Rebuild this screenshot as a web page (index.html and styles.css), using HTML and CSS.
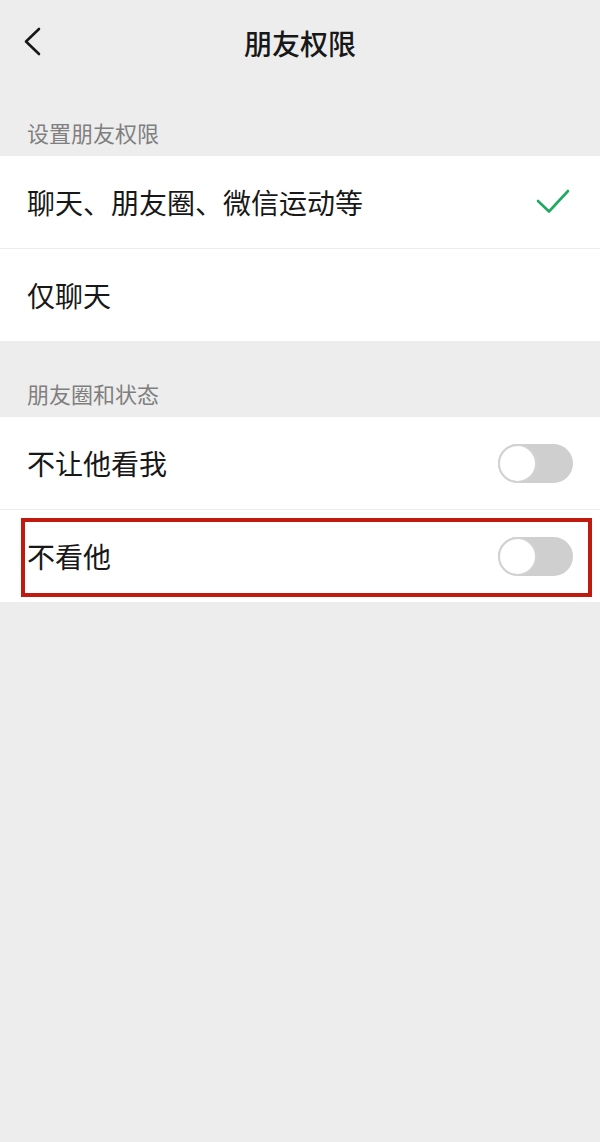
FILE: index.html
```html
<!DOCTYPE html>
<html lang="zh-CN">
<head>
  <meta charset="UTF-8" />
  <meta name="viewport" content="width=device-width, initial-scale=1.0"/>
  <title>朋友权限</title>
  <link rel="stylesheet" href="styles.css">
</head>
<body>
  <div class="nav">
    <svg class="back" width="20" height="32" viewBox="0 0 20 32">
      <polyline points="15,2 2,14.5 15,27" fill="none" stroke="#181818" stroke-width="2.6" stroke-linecap="round" stroke-linejoin="round"/>
    </svg>
    <h1>朋友权限</h1>
  </div>

  <div class="section-title">设置朋友权限</div>
  <div class="card">
    <div class="row">
      <span>聊天、朋友圈、微信运动等</span>
      <svg class="check" width="34" height="26" viewBox="0 0 34 26">
        <polyline points="2,13 13,23.5 32,3" fill="none" stroke="#1faa62" stroke-width="2.6" stroke-linecap="round" stroke-linejoin="round"/>
      </svg>
    </div>
    <div class="row">
      <span>仅聊天</span>
    </div>
  </div>

  <div class="section-title">朋友圈和状态</div>
  <div class="card">
    <div class="row">
      <span>不让他看我</span>
      <div class="switch"><div class="knob"></div></div>
    </div>
    <div class="row marked">
      <span>不看他</span>
      <div class="switch"><div class="knob"></div></div>
    </div>
  </div>
</body>
</html>
```

FILE: styles.css
```css
body {
  margin: 0;
  background: #ededed;
  font-family: "Noto Sans CJK SC", "Noto Sans", sans-serif;
  color: #181818;
  min-height: 1142px;
}

.nav {
  height: 80px;
  padding-top: 6px;
  box-sizing: border-box;
  display: flex;
  align-items: center;
  justify-content: center;
  position: relative;
}

.back {
  position: absolute;
  left: 24px;
  top: 27px;
}

.nav h1 {
  margin: 0;
  font-size: 28px;
  font-weight: 500;
  line-height: 36px;
}

.section-title {
  padding: 40px 27px 12px;
  font-size: 22px;
  line-height: 24px;
  color: #7f7f7f;
}

.card {
  background: #fff;
}

.row {
  height: 92px;
  display: flex;
  align-items: center;
  justify-content: space-between;
  padding: 0 27px;
  font-size: 28px;
  position: relative;
}

.row + .row {
  border-top: 1px solid #ececec;
}

.check {
  margin-right: 3px;
  margin-top: -2px;
}

.switch {
  width: 75px;
  height: 39px;
  border-radius: 20px;
  background: #cfcfcf;
  display: flex;
  align-items: center;
}

.knob {
  width: 35px;
  height: 35px;
  border-radius: 50%;
  background: #fff;
  border: 2px solid #d2d2d2;
}

.marked::after {
  content: "";
  position: absolute;
  left: 21px;
  right: 8px;
  top: 8px;
  bottom: 5px;
  border: 4px solid #c01a10;
}
```
